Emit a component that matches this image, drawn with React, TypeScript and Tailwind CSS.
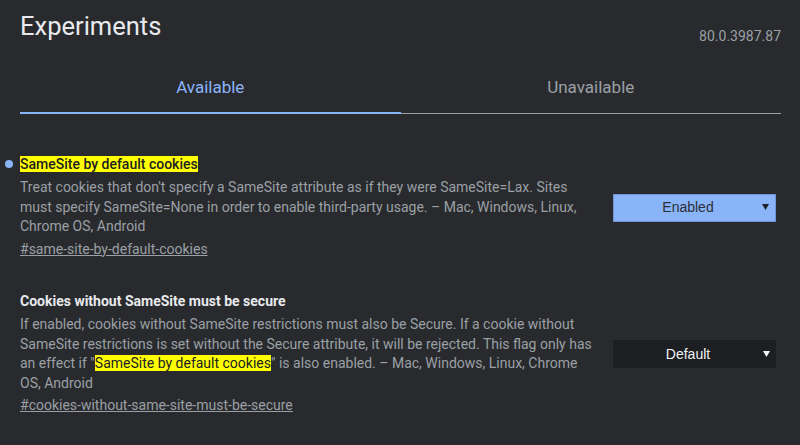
const flags = [
  {
    id: 'same-site-by-default-cookies',
    title: 'SameSite by default cookies',
    highlighted: true,
    value: 'Enabled',
  },
  {
    id: 'cookies-without-same-site-must-be-secure',
    title: 'Cookies without SameSite must be secure',
    highlighted: false,
    value: 'Default',
  },
];

function Arrow({ color }: { color: string }) {
  return (
    <svg width="7" height="6" viewBox="0 0 7 6" className="shrink-0">
      <path d="M0 0h7L3.5 6z" fill={color} />
    </svg>
  );
}

function Select({ value, active }: { value: string; active: boolean }) {
  return (
    <div
      className={
        active
          ? 'w-[163px] h-7 ml-[13px] mr-[5px] shrink-0 flex items-center bg-[#8ab4f8] border border-[#6f95d4] text-[#2b2f36]'
          : 'w-[163px] h-7 ml-[13px] mr-[5px] shrink-0 flex items-center bg-[#1d1e21] text-[#f1f3f4]'
      }
      style={{ fontFamily: '"Liberation Sans", Arial, sans-serif' }}
    >
      <span className="flex-1 text-center text-[14px]">{value}</span>
      <span className="pr-[6px] pb-[1px]">
        <Arrow color={active ? '#1f2329' : '#f1f3f4'} />
      </span>
    </div>
  );
}

export default function App() {
  return (
    <div
      className="min-h-[445px] bg-[#292a2d] pl-5 pr-[19px] text-[#9aa0a6]"
      style={{ fontFamily: 'Roboto, "Liberation Sans", sans-serif' }}
    >
      {/* Header */}
      <div className="flex items-end justify-between pt-[9px]">
        <h1 className="text-[25.5px] leading-[34px] text-[#e8eaed]">Experiments</h1>
        <span className="text-[14px] leading-none pb-0 text-[#9aa0a6]">80.0.3987.87</span>
      </div>

      {/* Tabs */}
      <div className="flex mt-[33px] border-b border-[#9aa0a6]">
        <div className="flex-1 text-center text-[17px] leading-[22px] text-[#8ab4f8] pb-[14px] border-b-2 border-[#8ab4f8] -mb-[1px]">
          Available
        </div>
        <div className="flex-1 text-center text-[17px] leading-[22px] text-[#9aa0a6] pb-[14px]">Unavailable</div>
      </div>

      {/* Flags */}
      <div className="pt-[42px] flex flex-col gap-[34px]">
        {flags.map((f) => (
          <div key={f.id} className="flex items-center">
            <div className="flex-1 relative">
              {f.highlighted && (
                <span className="absolute -left-[15px] top-[4px] w-[8px] h-[8px] rounded-full bg-[#8ab4f8]" />
              )}
              <h2 className="text-[14px] leading-[16px] font-medium">
                {f.highlighted ? (
                  <span className="bg-[#ffff00] text-[#202124]">{f.title}</span>
                ) : (
                  <span className="text-[#e8eaed] font-bold">{f.title}</span>
                )}
              </h2>
              <p className="mt-[6px] text-[14px] leading-[19.5px]">
                {f.highlighted ? (
                  <>
                    Treat cookies that don't specify a SameSite attribute as if they were SameSite=Lax. Sites
                    must specify SameSite=None in order to enable third-party usage. – Mac, Windows, Linux,
                    Chrome OS, Android
                  </>
                ) : (
                  <>
                    If enabled, cookies without SameSite restrictions must also be Secure. If a cookie without
                    SameSite restrictions is set without the Secure attribute, it will be rejected. This flag only
                    has an effect if "<span className="bg-[#ffff00] text-[#202124]">SameSite by default cookies</span>"
                    is also enabled. – Mac, Windows, Linux, Chrome OS, Android
                  </>
                )}
              </p>
              <a className="block mt-[3px] text-[14px] leading-[19.5px] underline text-[#9aa0a6]">#{f.id}</a>
            </div>
            <Select value={f.value} active={f.value !== 'Default'} />
          </div>
        ))}
      </div>
    </div>
  );
}
